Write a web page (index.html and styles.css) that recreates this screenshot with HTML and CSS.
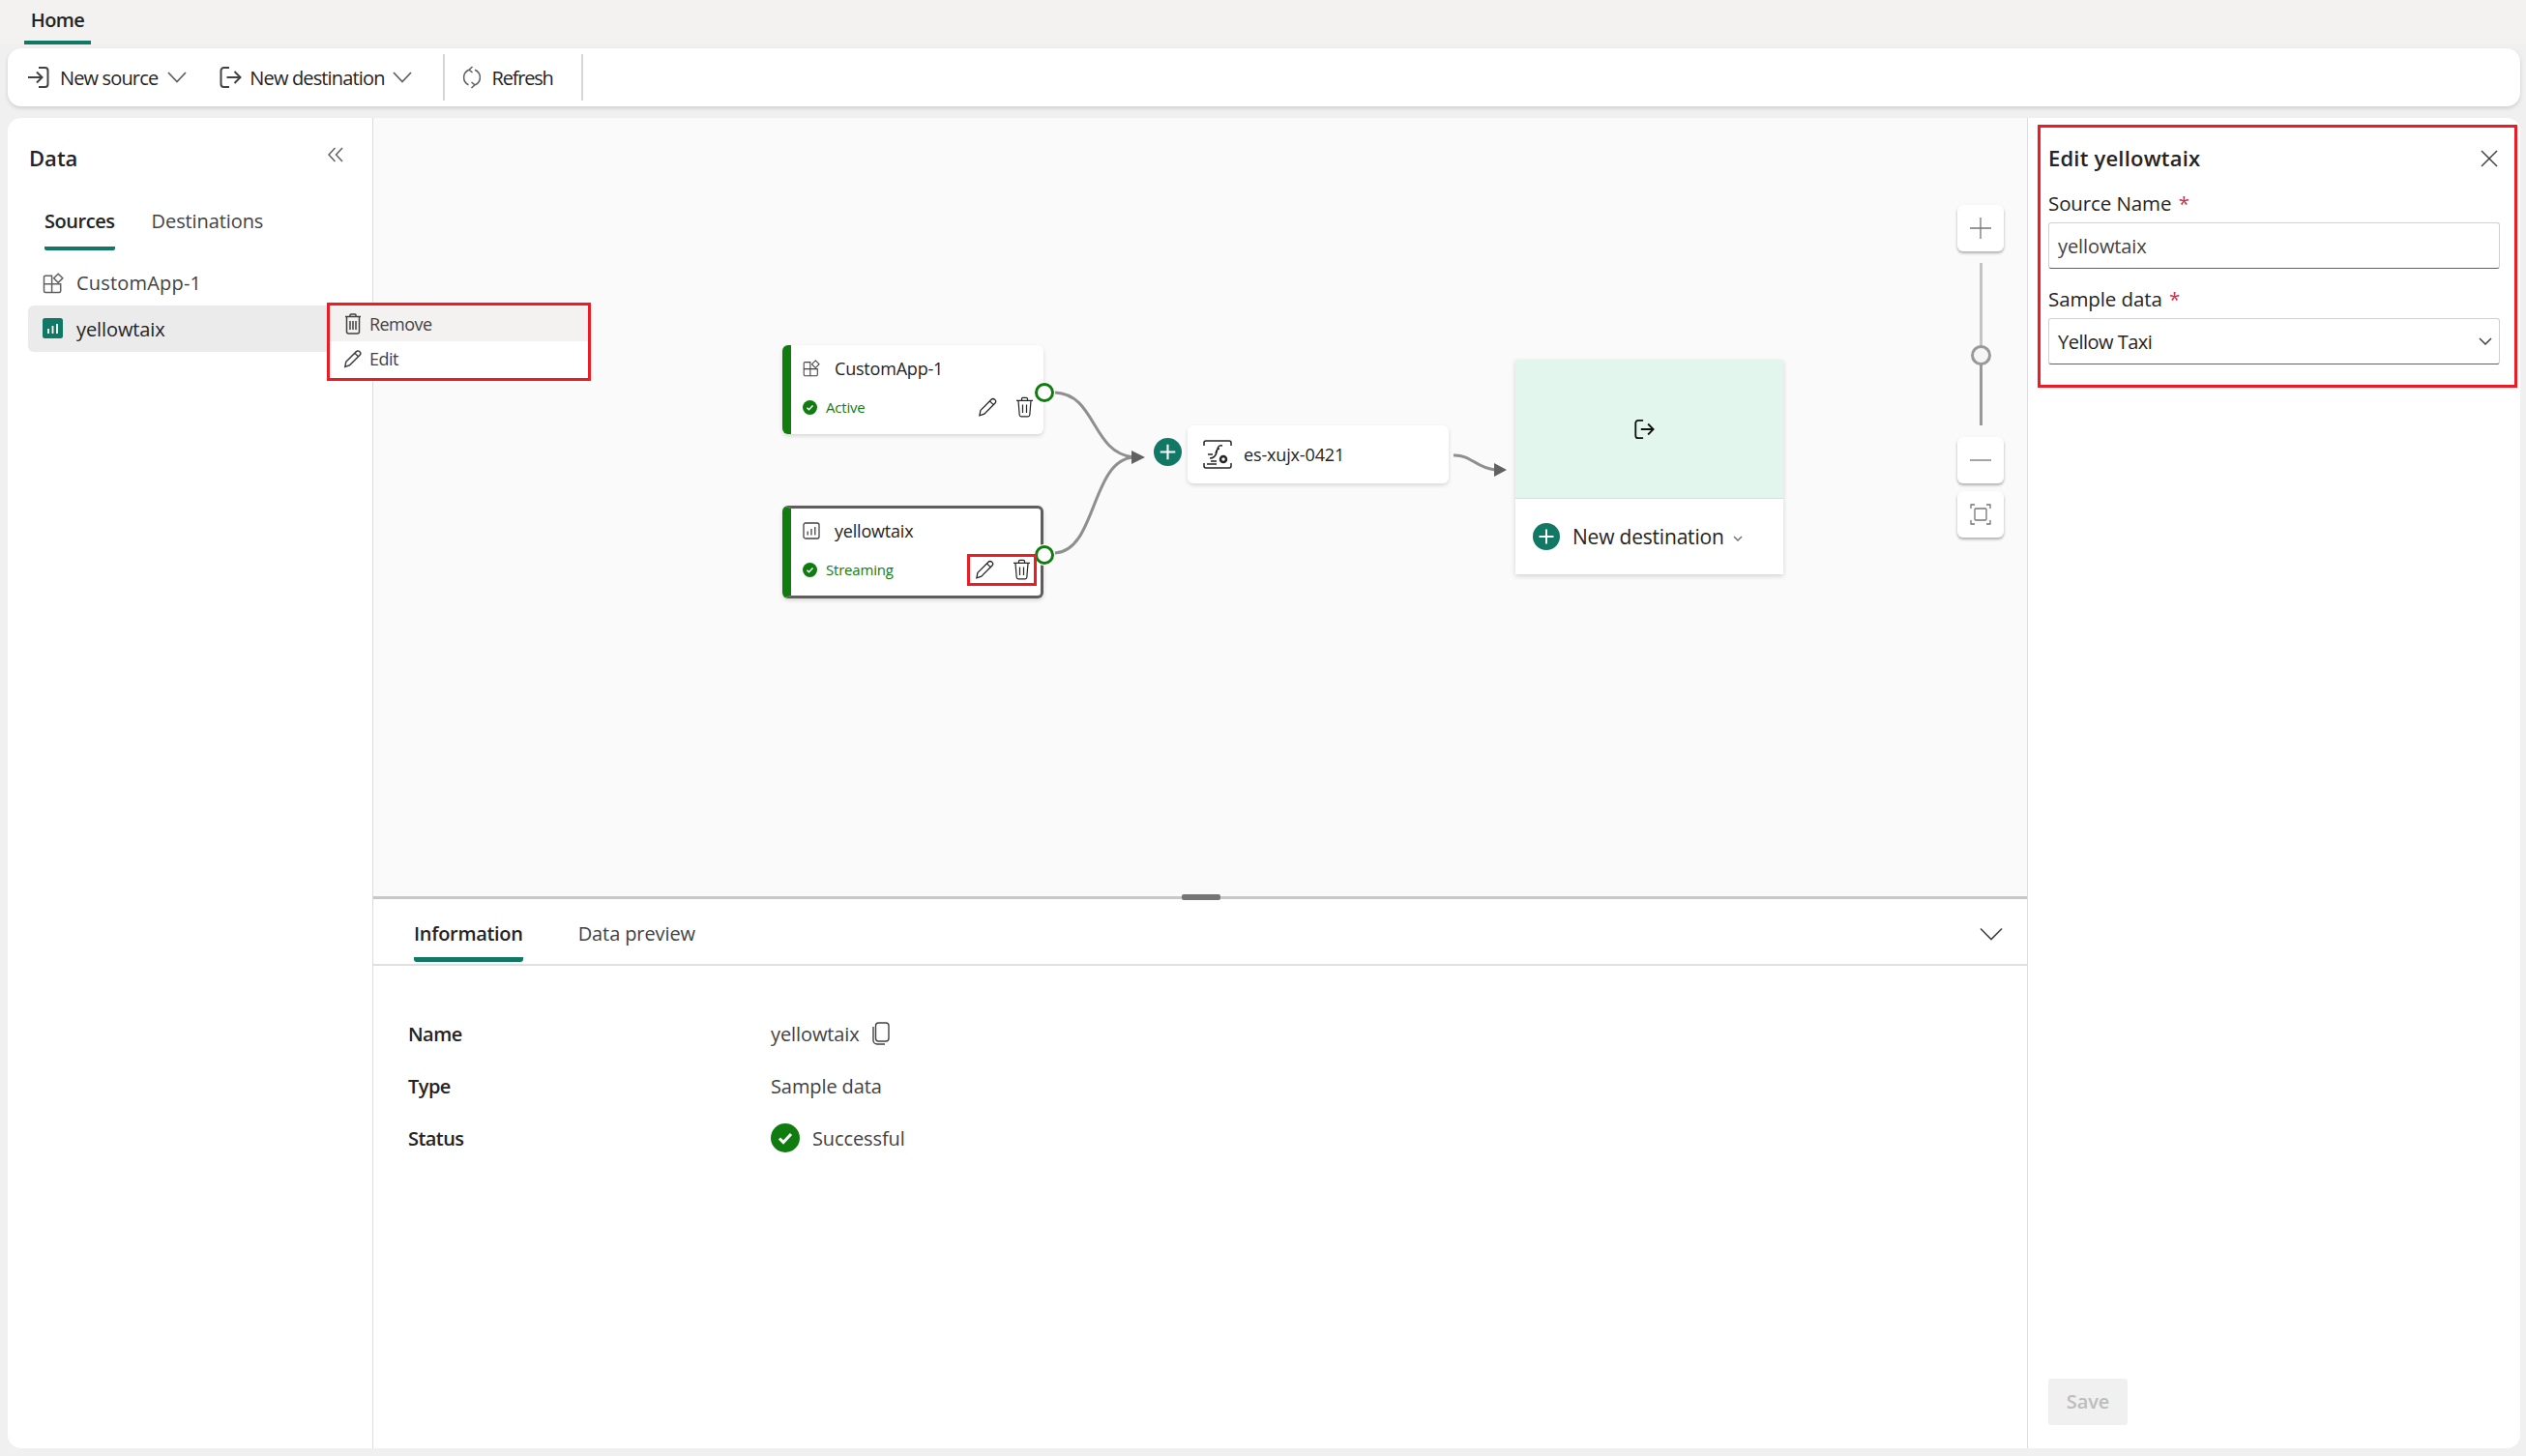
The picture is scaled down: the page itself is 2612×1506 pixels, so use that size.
FILE: index.html
```html
<!DOCTYPE html>
<html lang="en">
<head>
    <meta charset="UTF-8">
    <meta name="viewport" content="width=device-width, initial-scale=1.0">
    <title>Edit yellowtaix</title>
    <link rel="stylesheet" href="styles.css">
</head>
<body>
    <!-- shared icons -->
    <svg class="defs" width="0" height="0">
        <symbol id="i-trash" viewBox="0 0 20 22">
            <path d="M7 4V2.6A1.2 1.2 0 0 1 8.2 1.4h3.6A1.2 1.2 0 0 1 13 2.6V4M1.500 4.400h17M3.500 4.600l1.200 14.600a1.800 1.800 0 0 0 1.800 1.600h7a1.800 1.800 0 0 0 1.800-1.600l1.200-14.600M8 8.500v8.500M12 8.500v8.500"/>
        </symbol>
        <symbol id="i-pencil" viewBox="0 0 20 20">
            <path d="M2.8 13.2L13.4 2.6a2.3 2.3 0 0 1 3.3 0l.4.4a2.3 2.3 0 0 1 0 3.2L6.5 16.8 1.8 18.4zM11.8 4.2l4.2 4"/>
        </symbol>
        <symbol id="i-app" viewBox="0 0 22 22">
            <path d="M9.6 3.2H3A1.5 1.5 0 0 0 1.5 4.7V19A1.5 1.5 0 0 0 3 20.5h14.2a1.5 1.5 0 0 0 1.5-1.5v-7.2H9.6zM9.6 11.8H1.5M9.6 11.8v8.7M16.2 1.2l4.6 4.6-4.6 4.6-4.6-4.6z"/>
        </symbol>
        <symbol id="i-chart" viewBox="0 0 18 18">
            <rect x="1" y="1" width="16" height="16" rx="2"/>
            <path d="M5.2 9.5v4M9 7v6.500M12.800 5v8.500"/>
        </symbol>
        <symbol id="i-check" viewBox="0 0 30 30">
            <circle cx="15" cy="15" r="15" fill="#107c10" stroke="none"/>
            <path d="M9 15.500l4 4 8-8.500" fill="none" stroke="#fff" stroke-width="3"/>
        </symbol>
        <symbol id="i-plus-round" viewBox="0 0 28 28">
            <circle cx="14" cy="14" r="14" fill="#117865" stroke="none"/>
            <path d="M14 6.500v15M6.500 14h15" fill="none" stroke="#fff" stroke-width="2"/>
        </symbol>
        <symbol id="i-exit" viewBox="0 0 24 24">
            <path d="M11 2H5.500A3 3 0 0 0 2.500 5v14a3 3 0 0 0 3 3H11M8.500 12H22M16.500 6l6 6-6 6"/>
        </symbol>
    </svg>

    <div class="page">
        <div class="tabbar">
            <div class="ribbon-tab">Home</div>
        </div>

        <div class="toolbar">
            <div class="tool-btn">
                <svg class="icon-24" viewBox="0 0 24 24"><path d="M12 2h6.500a3 3 0 0 1 3 3v14a3 3 0 0 1-3 3H12M1 12h14M10 6.500l5.500 5.500-5.500 5.500"/></svg>
                <span>New source</span>
                <svg class="chevron" viewBox="0 0 20 12"><path d="M1 1l9 9.500 9-9.500"/></svg>
            </div>
            <div class="tool-btn">
                <svg class="icon-24"><use href="#i-exit"/></svg>
                <span>New destination</span>
                <svg class="chevron" viewBox="0 0 20 12"><path d="M1 1l9 9.500 9-9.500"/></svg>
            </div>
            <div class="tool-sep"></div>
            <div class="tool-btn refresh">
                <svg class="icon-refresh" viewBox="0 0 20 24"><path d="M7 4.200A8.500 8.500 0 0 0 6.500 19.800M13 4.200A8.500 8.500 0 0 1 13.500 19.800M10.500 1L7 4.200l3.500 2.800M9.500 23l3.500-3.200L9.500 17"/></svg>
                <span>Refresh</span>
            </div>
            <div class="tool-sep"></div>
        </div>

        <div class="main">
            <div class="sidebar">
                <div class="sidebar-head">
                    <h2>Data</h2>
                    <svg class="collapse" viewBox="0 0 16 16"><path d="M7.500 1L1 8l6.500 7M15 1L8.500 8l6.500 7"/></svg>
                </div>
                <div class="side-tabs">
                    <div class="side-tab active">Sources</div>
                    <div class="side-tab">Destinations</div>
                </div>
                <div class="side-row">
                    <svg class="icon-22"><use href="#i-app"/></svg>
                    <span>CustomApp-1</span>
                </div>
                <div class="side-row selected">
                    <svg class="icon-22" viewBox="0 0 22 22">
                        <rect width="21" height="21" rx="2.500" fill="#117865" stroke="none"/>
                        <path d="M6 11v5M10.500 8v8M15 6v10" stroke="#fff" stroke-width="1.800"/>
                    </svg>
                    <span>yellowtaix</span>
                </div>
                <div class="context-menu">
                    <div class="menu-item hover">
                        <svg class="menu-icon" viewBox="0 0 18 22"><path d="M6 3V2a1 1 0 0 1 1-1h4a1 1 0 0 1 1 1v1M1 3.500h16M2.500 3.500V19a2 2 0 0 0 2 2h9a2 2 0 0 0 2-2V3.500M6 8v9M9 8v9M12 8v9"/></svg>
                        <span>Remove</span>
                    </div>
                    <div class="menu-item">
                        <svg class="menu-icon"><use href="#i-pencil"/></svg>
                        <span>Edit</span>
                    </div>
                </div>
            </div>

            <div class="center">
                <div class="canvas">
                    <svg class="edges" width="1710" height="805">
                        <path d="M705 284C748 286 742 346 786 351M705 450C748 448 742 354 786 351M1117 349C1135 348 1140 362 1160 364"/>
                        <polygon points="784,344 798,351 784,358"/>
                        <polygon points="1159,357 1172,364 1159,371"/>
                    </svg>

                    <div class="node node-one">
                        <div class="node-title">
                            <svg class="icon-18"><use href="#i-app"/></svg>
                            <span>CustomApp-1</span>
                        </div>
                        <div class="node-status">
                            <svg class="icon-15"><use href="#i-check"/></svg>
                            <span>Active</span>
                            <div class="node-actions">
                                <svg class="action-icon"><use href="#i-pencil"/></svg>
                                <svg class="action-icon"><use href="#i-trash"/></svg>
                            </div>
                        </div>
                        <div class="port"></div>
                    </div>

                    <div class="node node-two">
                        <div class="node-title">
                            <svg class="icon-18"><use href="#i-chart"/></svg>
                            <span>yellowtaix</span>
                        </div>
                        <div class="node-status">
                            <svg class="icon-15"><use href="#i-check"/></svg>
                            <span>Streaming</span>
                            <div class="node-actions">
                                <svg class="action-icon"><use href="#i-pencil"/></svg>
                                <svg class="action-icon"><use href="#i-trash"/></svg>
                            </div>
                        </div>
                        <div class="port"></div>
                        <div class="mark"></div>
                    </div>

                    <svg class="add-btn"><use href="#i-plus-round"/></svg>

                    <div class="stream-node">
                        <svg class="stream-icon" viewBox="0 0 30 30">
                            <path d="M1 6V3a2 2 0 0 1 2-2h24a2 2 0 0 1 2 2v3M1 24v3a2 2 0 0 0 2 2h24a2 2 0 0 0 2-2v-3M20 6c-5-1-5 3-6 7s-3 6-7 6M17 9c-3 0-3 2-4 5M5 15h5M8 22h6M4 25h10"/>
                            <circle cx="21" cy="20" r="3" stroke-width="2.500"/>
                        </svg>
                        <span>es-xujx-0421</span>
                    </div>

                    <div class="dest-card">
                        <div class="dest-top">
                            <svg class="icon-exit"><use href="#i-exit"/></svg>
                        </div>
                        <div class="dest-foot">
                            <svg class="icon-28"><use href="#i-plus-round"/></svg>
                            <span>New destination</span>
                            <svg class="mini-chevron" viewBox="0 0 10 6"><path d="M1 1l4 4 4-4"/></svg>
                        </div>
                    </div>

                    <div class="zoom-tools">
                        <div class="zoom-btn"><svg viewBox="0 0 22 22"><path d="M11 0v22M0 11h22"/></svg></div>
                        <div class="slider"><div class="thumb"></div></div>
                        <div class="zoom-btn"><svg viewBox="0 0 22 22"><path d="M0 11h22"/></svg></div>
                        <div class="zoom-btn fit"><svg viewBox="0 0 22 22"><path d="M1 5V1h4M17 1h4v4M1 17v4h4M17 21h4v-4"/><rect x="5" y="5" width="12" height="12" rx="1"/></svg></div>
                    </div>
                </div>

                <div class="details">
                    <div class="handle"></div>
                    <div class="detail-tabs">
                        <div class="detail-tab active">Information</div>
                        <div class="detail-tab">Data preview</div>
                        <svg class="detail-chevron" viewBox="0 0 24 14"><path d="M1 1.500l11 11 11-11"/></svg>
                    </div>
                    <div class="info-grid">
                        <div class="info-label">Name</div>
                        <div class="info-value">yellowtaix
                            <svg class="copy-icon" viewBox="0 0 18 24"><rect x="3.500" y="1" width="13.500" height="19" rx="3"/><path d="M1 5v14a4 4 0 0 0 4 4h8"/></svg>
                        </div>
                        <div class="info-label">Type</div>
                        <div class="info-value">Sample data</div>
                        <div class="info-label">Status</div>
                        <div class="info-value">
                            <svg class="icon-30"><use href="#i-check"/></svg>
                            Successful
                        </div>
                    </div>
                </div>
            </div>

            <div class="panel">
                <div class="panel-form">
                    <div class="panel-head">
                        <h3>Edit yellowtaix</h3>
                        <svg class="close" viewBox="0 0 18 18"><path d="M1 1l16 16M17 1L1 17"/></svg>
                    </div>
                    <label class="field-label">Source Name <em>*</em></label>
                    <input class="field" type="text" value="yellowtaix" readonly>
                    <label class="field-label">Sample data <em>*</em></label>
                    <div class="field select">
                        <span>Yellow Taxi</span>
                        <svg viewBox="0 0 14 8"><path d="M1 1l6 6 6-6"/></svg>
                    </div>
                </div>
                <div class="save-btn">Save</div>
            </div>
        </div>
    </div>
</body>
</html>
```

FILE: styles.css
```css
* {
    margin: 0;
    padding: 0;
    box-sizing: border-box;
}

body {
    background-color: #f0f0f0;
    font-family: "Open Sans", "Noto Sans", sans-serif;
    font-size: 20px;
    letter-spacing: -0.1px;
    color: #242424;
    overflow: hidden;
}

svg {
    display: block;
    flex: none;
    fill: none;
    stroke: #242424;
    stroke-width: 1.5;
}

.defs {
    position: absolute;
}

.page {
    height: 100vh;
    display: flex;
    flex-direction: column;
}

/* top ribbon */
.tabbar {
    height: 46px;
    padding-left: 25px;
    flex: none;
    background: #f3f2f1;
}

.ribbon-tab {
    width: 69px;
    height: 46px;
    line-height: 41px;
    text-align: center;
    font-weight: 600;
    letter-spacing: -0.55px;
    border-bottom: 4px solid #117865;
}

.toolbar {
    height: 60px;
    margin: 4px 6px 0 8px;
    padding-left: 20px;
    display: flex;
    align-items: center;
    background: #fff;
    border-radius: 14px;
    box-shadow: 0 2px 4px rgba(0, 0, 0, 0.14);
    flex: none;
    letter-spacing: -0.85px;
}

.tool-btn {
    display: flex;
    align-items: center;
    gap: 10px;
    margin-right: 33px;
}

.tool-btn:nth-child(2) {
    gap: 8px;
    margin-right: 32px;
}

.icon-24 {
    width: 24px;
    height: 24px;
    stroke: #424242;
    stroke-width: 2;
}

.chevron {
    width: 20px;
    height: 12px;
    stroke: #616161;
    stroke-width: 1.8;
}

.tool-sep {
    width: 2px;
    height: 48px;
    background: #d6d6d6;
}

.refresh {
    margin-left: 18px;
    margin-right: 29px;
    gap: 11px;
    letter-spacing: -1.2px;
}

.icon-refresh {
    width: 20px;
    height: 24px;
    stroke: #616161;
}

.main {
    flex: 1;
    min-height: 0;
    display: flex;
    margin: 12px 6px 8px 8px;
    background: #fff;
    border-radius: 14px;
    overflow: hidden;
}

/* left data list */
.sidebar {
    position: relative;
    width: 378px;
    flex: none;
    border-right: 1px solid #dcdcdc;
}

.sidebar-head {
    display: flex;
    justify-content: space-between;
    padding: 21px 30px 0 22px;
    height: 61px;
}

.sidebar-head h2 {
    font-size: 22px;
    line-height: 40px;
    font-weight: 600;
    letter-spacing: 0;
}

.collapse {
    width: 16px;
    height: 16px;
    margin-top: 9px;
    stroke: #616161;
}

.side-tabs {
    display: flex;
    gap: 38px;
    margin: 20px 0 10px 38px;
}

.side-tab {
    height: 56px;
    line-height: 52px;
    border-bottom: 4px solid transparent;
    color: #424242;
}

.side-tab.active {
    font-weight: 600;
    letter-spacing: -0.45px;
    color: #242424;
    border-bottom-color: #117865;
    border-radius: 0 0 2px 2px;
}

.side-row {
    display: flex;
    align-items: center;
    gap: 13px;
    height: 47px;
    margin: 0 30px 0 21px;
    padding-left: 15px;
    border-radius: 6px;
    letter-spacing: 0.2px;
    color: #424242;
}

.side-row.selected {
    height: 48px;
    background: #ebebeb;
    letter-spacing: -0.1px;
    color: #242424;
}

.icon-22 {
    width: 22px;
    height: 22px;
    stroke: #616161;
}

.context-menu {
    position: absolute;
    left: 330px;
    top: 191px;
    width: 273px;
    height: 81px;
    background: #fff;
    border: 3px solid #ed1c24;
    z-index: 5;
    font-size: 18px;
    letter-spacing: -0.55px;
    color: #424242;
}

.menu-item {
    display: flex;
    align-items: center;
    gap: 7px;
    height: 38px;
    padding: 0 0 2px 14px;
}

.menu-item.hover {
    height: 37px;
    padding-bottom: 0;
    background: #f3f2f1;
}

.menu-icon {
    width: 20px;
    height: 22px;
    stroke: #424242;
}

/* canvas */
.center {
    flex: 1;
    min-width: 0;
    display: flex;
    flex-direction: column;
    border-right: 1px solid #dcdcdc;
}

.canvas {
    position: relative;
    height: 805px;
    flex: none;
    background: #fafafa;
}

.edges {
    position: absolute;
    left: 0;
    top: 0;
    stroke: #8f8f8f;
    stroke-width: 3;
}

.edges polygon {
    fill: #616161;
    stroke: none;
}

.node {
    position: absolute;
    left: 423px;
    width: 270px;
    background: #fff;
    border-left: 9px solid #107c10;
    border-radius: 6px;
    padding: 12px 10px 0 12px;
    box-shadow: 0 2px 4px rgba(0, 0, 0, 0.14);
}

.node-one {
    top: 235px;
    height: 92px;
}

.node-two {
    top: 401px;
    height: 96px;
    border-top: 3px solid #605e5c;
    border-right: 3px solid #605e5c;
    border-bottom: 3px solid #605e5c;
}

.node-title {
    display: flex;
    align-items: center;
    gap: 15px;
    height: 24px;
    font-size: 18px;
    font-weight: 500;
    letter-spacing: -0.2px;
}

.node-two .node-title {
    margin-top: -1px;
}

.icon-18 {
    width: 18px;
    height: 18px;
    stroke: #424242;
    stroke-width: 1.3;
}

.node-status {
    display: flex;
    align-items: center;
    gap: 9px;
    height: 24px;
    margin-top: 16px;
    font-size: 15px;
    letter-spacing: -0.2px;
    color: #107c10;
}

.icon-15 {
    width: 15px;
    height: 15px;
}

.node-actions {
    display: flex;
    gap: 17px;
    margin-left: auto;
    margin-right: -1px;
}

.action-icon {
    width: 21px;
    height: 22px;
    stroke: #242424;
    stroke-width: 1.2;
}

.port {
    position: absolute;
    left: 251px;
    top: 38px;
    width: 22px;
    height: 22px;
    border-radius: 50%;
    background: #fff;
    display: flex;
    align-items: center;
    justify-content: center;
}

.port::after {
    content: "";
    width: 14px;
    height: 14px;
    border: 3px solid #107c10;
    border-radius: 50%;
}

.node-two .port {
    top: 37px;
}

.mark {
    position: absolute;
    left: 182px;
    top: 47px;
    width: 72px;
    height: 33px;
    border: 3px solid #ed1c24;
}

.add-btn {
    position: absolute;
    left: 807px;
    top: 331px;
    width: 29px;
    height: 29px;
}

.stream-node {
    position: absolute;
    left: 842px;
    top: 318px;
    width: 270px;
    height: 60px;
    display: flex;
    align-items: center;
    gap: 12px;
    padding-left: 16px;
    background: #fff;
    border-radius: 6px;
    font-size: 18px;
    font-weight: 500;
    letter-spacing: -0.15px;
    box-shadow: 0 2px 4px rgba(0, 0, 0, 0.14);
}

.stream-icon {
    width: 30px;
    height: 30px;
    stroke-width: 1.5;
}

.dest-card {
    position: absolute;
    left: 1181px;
    top: 250px;
    width: 277px;
    height: 222px;
    background: #fff;
    box-shadow: 0 2px 5px rgba(0, 0, 0, 0.16);
}

.dest-top {
    height: 144px;
    padding: 1px 12px 0 0;
    background: #e3f6ee;
    border-bottom: 1px solid #dcdcdc;
    display: flex;
    align-items: center;
    justify-content: center;
}

.icon-exit {
    width: 22px;
    height: 22px;
    stroke: #111;
    stroke-width: 2;
}

.dest-foot {
    height: 78px;
    padding-left: 18px;
    display: flex;
    align-items: center;
    gap: 13px;
    font-size: 21px;
    font-weight: 500;
    letter-spacing: -0.2px;
}

.icon-28 {
    width: 28px;
    height: 28px;
}

.mini-chevron {
    width: 10px;
    height: 6px;
    margin: 4px 0 0 -4px;
    stroke: #757575;
}

.zoom-tools {
    position: absolute;
    right: 24px;
    top: 90px;
    width: 48px;
    display: flex;
    flex-direction: column;
    align-items: center;
}

.zoom-btn {
    width: 48px;
    height: 48px;
    background: #fff;
    border-radius: 6px;
    box-shadow: 0 2px 3px rgba(0, 0, 0, 0.3);
    display: flex;
    align-items: center;
    justify-content: center;
}

.zoom-btn svg {
    width: 22px;
    height: 22px;
    stroke: #757575;
    stroke-width: 1.3;
}

.zoom-btn.fit {
    margin-top: 8px;
}

.slider {
    position: relative;
    width: 3px;
    height: 168px;
    margin: 12px 0;
    background: linear-gradient(to bottom, #c4c4c4 0, #c4c4c4 55%, #999 55%, #999 100%);
}

.thumb {
    position: absolute;
    left: -9px;
    top: 85px;
    width: 21px;
    height: 21px;
    border: 3px solid #999;
    border-radius: 50%;
    background: #f5f5f5;
}

/* bottom details */
.details {
    position: relative;
    flex: 1;
    border-top: 3px solid #c8c8c8;
}

.handle {
    position: absolute;
    left: 836px;
    top: -5px;
    width: 40px;
    height: 6px;
    border-radius: 2px;
    background: #757575;
}

.detail-tabs {
    display: flex;
    gap: 57px;
    height: 69px;
    padding: 0 25px 0 42px;
    border-bottom: 2px solid #e0e0e0;
}

.detail-tab {
    height: 65px;
    line-height: 72px;
    color: #424242;
}

.detail-tab.active {
    font-weight: 600;
    letter-spacing: -0.3px;
    color: #242424;
    border-bottom: 5px solid #117865;
    border-radius: 0 0 3px 3px;
}

.detail-chevron {
    width: 24px;
    height: 14px;
    margin: 29px 0 0 auto;
    stroke: #424242;
    stroke-width: 1.6;
}

.info-grid {
    display: grid;
    grid-template-columns: 375px 1fr;
    grid-auto-rows: 54px;
    padding: 43px 0 0 36px;
    align-items: center;
}

.info-label {
    font-weight: 600;
    letter-spacing: -0.55px;
}

.info-value {
    display: flex;
    align-items: center;
    gap: 13px;
    color: #424242;
}

.copy-icon {
    width: 18px;
    height: 24px;
    stroke: #424242;
    stroke-width: 1.4;
}

.icon-30 {
    width: 30px;
    height: 30px;
}

/* right edit panel */
.panel {
    width: 509px;
    flex: none;
    display: flex;
    flex-direction: column;
}

.panel-form {
    height: 272px;
    margin: 7px 3px 0 10px;
    padding: 15px 15px 0 8px;
    border: 3px solid #ed1c24;
}

.panel-head {
    display: flex;
    justify-content: space-between;
    align-items: center;
    height: 32px;
}

.panel-head h3 {
    font-size: 22px;
    font-weight: 600;
    letter-spacing: 0.2px;
}

.close {
    width: 18px;
    height: 18px;
    margin: 2px 2px 0 0;
    stroke: #424242;
}

.field-label {
    display: block;
    height: 28px;
    line-height: 26px;
    margin: 18px 0 5px;
    font-size: 20.5px;
    font-weight: 500;
    letter-spacing: -0.1px;
}

.field-label em {
    font-style: normal;
    color: #c4314b;
    margin-left: 2px;
}

.field {
    display: block;
    width: 100%;
    height: 48px;
    padding: 0 9px;
    border: 1px solid #d1d1d1;
    border-bottom-color: #616161;
    border-radius: 3px;
    background: #fff;
    font: inherit;
    letter-spacing: inherit;
    color: #424242;
    outline: none;
}

.select {
    display: flex;
    align-items: center;
    justify-content: space-between;
    letter-spacing: -0.5px;
    color: #242424;
}

.select svg {
    width: 14px;
    height: 8px;
    margin-right: -2px;
    stroke: #424242;
}

.save-btn {
    width: 82px;
    height: 48px;
    margin: auto 0 24px 21px;
    background: #f0f0f0;
    border-radius: 3px;
    text-align: center;
    line-height: 48px;
    font-weight: 600;
    color: #bdbdbd;
}
```
